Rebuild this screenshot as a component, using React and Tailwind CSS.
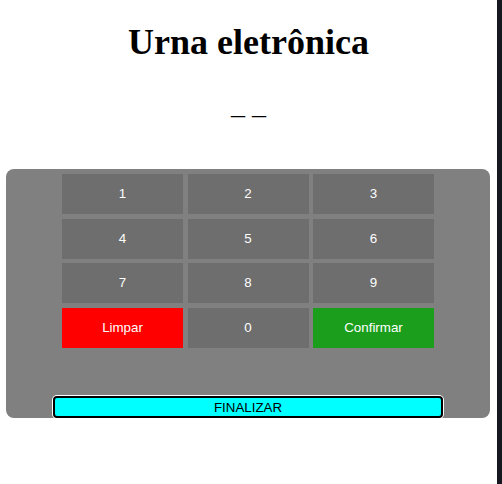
import React, { useState } from 'react';

const keys = ['1', '2', '3', '4', '5', '6', '7', '8', '9'];

const App = () => {
  const [voto, setVoto] = useState('');

  const digitar = (n) => {
    if (voto.length < 2) setVoto((v) => v + n);
  };

  const display = [0, 1].map((i) => voto[i] || '_').join(' ');

  return (
    <div className="flex min-h-[484px] bg-white">
      <div className="w-[497px] flex flex-col items-center">
        <h1 className="mt-[22px] text-[36px] leading-[41px] font-bold text-black [font-family:'Liberation_Serif',serif]">
          Urna eletrônica
        </h1>

        {/* visor */}
        <div className="mt-[27px] h-[30px] text-[28px] leading-[30px] text-black [font-family:'Liberation_Serif',serif]">
          {display}
        </div>

        {/* teclado */}
        <div className="self-start ml-[6px] mt-[49px] w-[484px] h-[249px] bg-[#808080] rounded-[8px] flex flex-col items-center pt-[5px] [font-family:'Liberation_Sans',sans-serif]">
          <div className="grid grid-cols-[121px_121px_121px] gap-x-[4.5px] gap-y-[4.67px]">
            {keys.map((k) => (
              <button
                key={k}
                onClick={() => digitar(k)}
                className="h-[40px] bg-[#6e6e6e] text-white text-[13.33px]"
              >
                {k}
              </button>
            ))}
            <button
              onClick={() => setVoto('')}
              className="h-[40px] bg-[#ff0000] text-white text-[13.33px]"
            >
              Limpar
            </button>
            <button
              onClick={() => digitar('0')}
              className="h-[40px] bg-[#6e6e6e] text-white text-[13.33px]"
            >
              0
            </button>
            <button className="h-[40px] bg-[#1b9e1b] text-white text-[13.33px]">Confirmar</button>
          </div>

          <button className="mt-auto w-[390px] h-[22px] bg-[#00ffff] border-2 border-black rounded-[4px] ring-1 ring-white text-black text-[13.33px] leading-[19px]">
            FINALIZAR
          </button>
        </div>
      </div>
      <div className="w-[5px] bg-[#17171f]" />
    </div>
  );
};

export default App;
